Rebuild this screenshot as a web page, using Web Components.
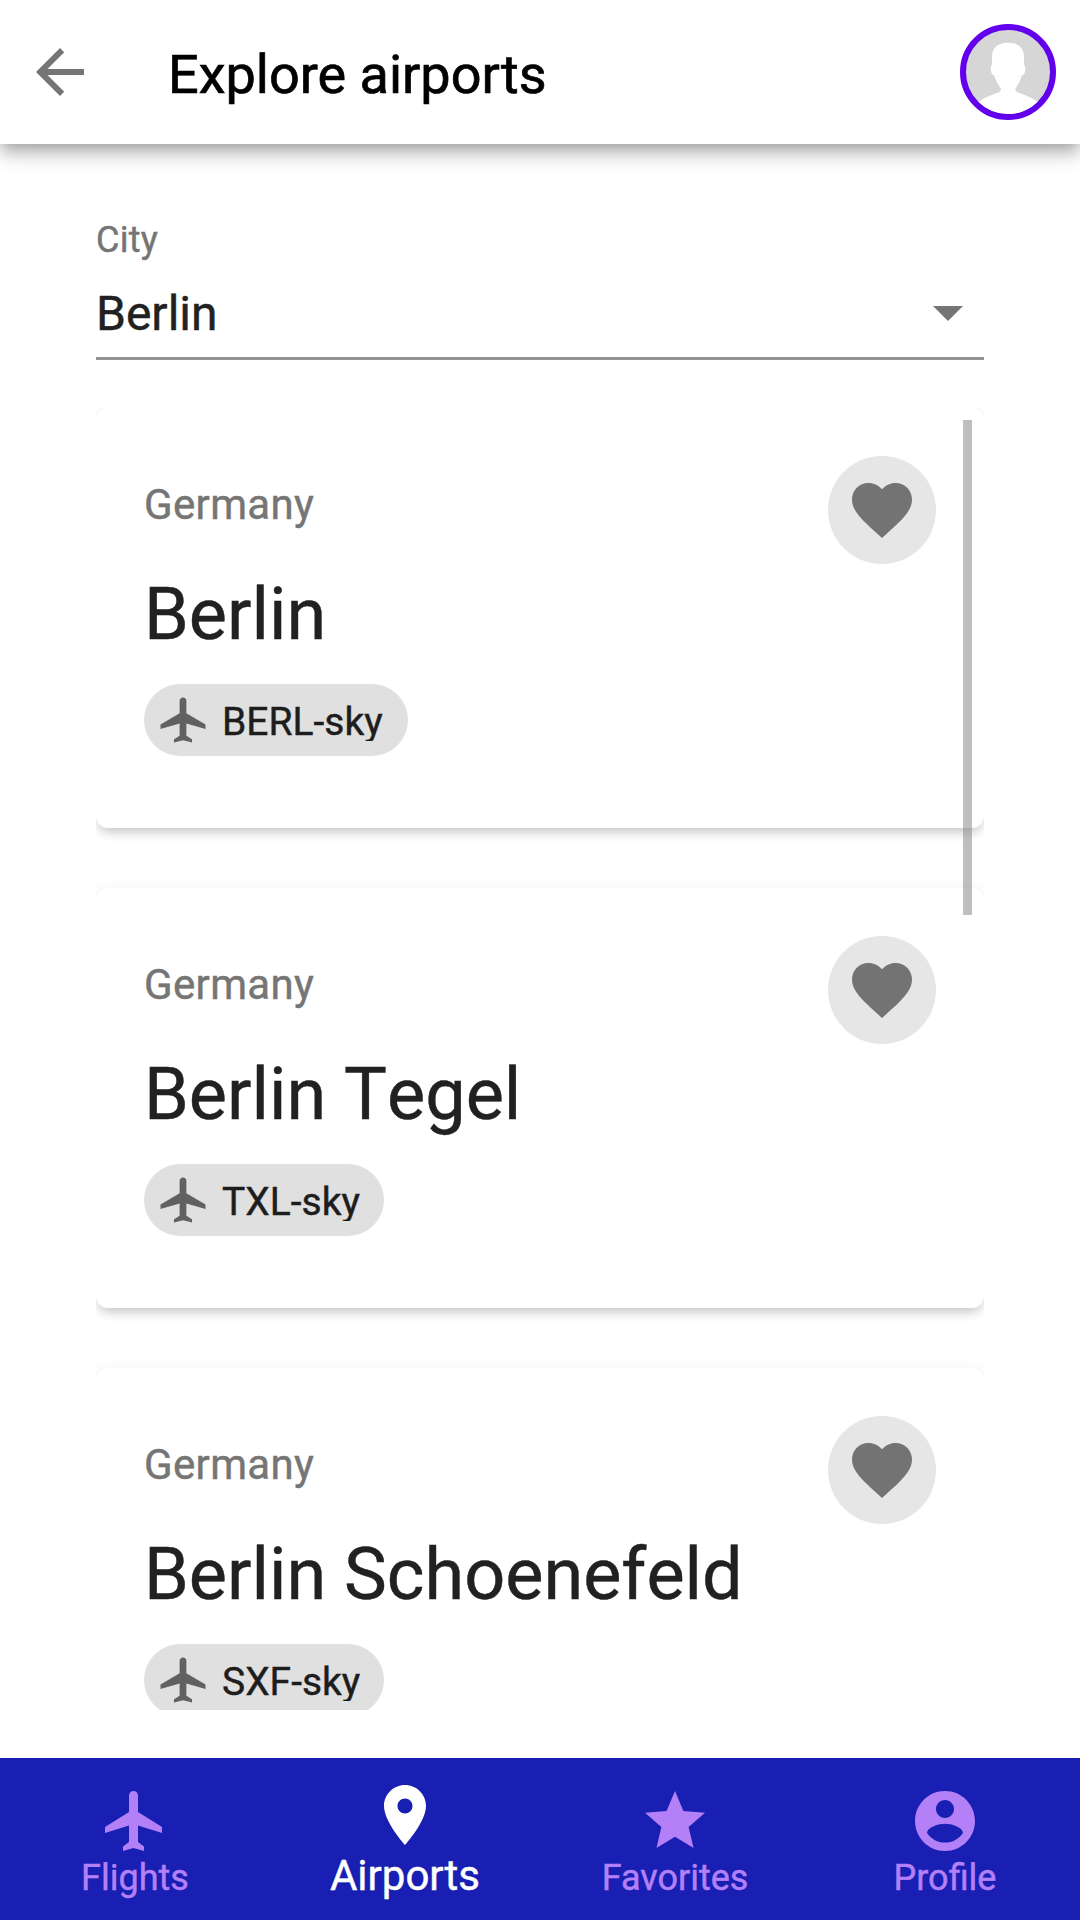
<!DOCTYPE html>
<html lang="en">
<head>
<meta charset="utf-8">
<title>Explore airports</title>
<style>
html,body{margin:0;height:100%;background:#fff}
body{font-family:Roboto,"Liberation Sans",sans-serif;color:#212121;-webkit-text-stroke:.45px currentColor}
</style>
</head>
<body>
<airport-app></airport-app>
<script>
const ICONS={
 back:'M20 11H7.83l5.59-5.59L12 4l-8 8 8 8 1.41-1.41L7.83 13H20v-2z',
 drop:'M7 10l5 5 5-5z',
 heart:'M12 21.35l-1.45-1.32C5.4 15.36 2 12.28 2 8.5 2 5.42 4.42 3 7.5 3c1.74 0 3.41.81 4.5 2.09C13.09 3.81 14.76 3 16.5 3 19.58 3 22 5.42 22 8.5c0 3.78-3.4 6.86-8.55 11.54L12 21.35z',
 plane:'M22 16v-2l-8.5-5V3.5c0-.83-.67-1.5-1.5-1.5s-1.5.67-1.5 1.5V9L2 14v2l8.5-2.5V19L8 20.5V22l4-1 4 1v-1.5L13.5 19v-5.5L22 16z',
 flight:'M21 16v-2l-8-5V3.5c0-.83-.67-1.5-1.5-1.5S10 2.67 10 3.5V9l-8 5v2l8-2.5V19l-2 1.5V22l3.5-1 3.5 1v-1.5L13 19v-5.5l8 2.5z',
 pin:'M12 2C8.13 2 5 5.13 5 9c0 5.25 7 13 7 13s7-7.75 7-13c0-3.87-3.13-7-7-7zm0 9.5c-1.38 0-2.5-1.12-2.5-2.5s1.12-2.5 2.5-2.5 2.5 1.12 2.5 2.5-1.12 2.5-2.5 2.5z',
 star:'M12 17.27L18.18 21l-1.64-7.03L22 9.24l-7.19-.61L12 2 9.19 8.63 2 9.24l5.46 4.73L5.82 21z',
 account:'M12 2C6.48 2 2 6.48 2 12s4.48 10 10 10 10-4.48 10-10S17.52 2 12 2zm0 3c1.66 0 3 1.34 3 3s-1.34 3-3 3-3-1.34-3-3 1.34-3 3-3zm0 14.2c-2.5 0-4.71-1.28-6-3.22.03-1.99 4-3.08 6-3.08 1.99 0 5.97 1.09 6 3.08-1.29 1.94-3.5 3.22-6 3.22z'
};
class Base extends HTMLElement{
 connectedCallback(){
  if(this.shadowRoot)return;
  const t=document.createElement('template');
  t.innerHTML=this.render();
  this.attachShadow({mode:'open'}).appendChild(t.content.cloneNode(true));
 }
}
customElements.define('md-icon',class extends Base{
 render(){return `<style>:host{display:block;flex:none;width:var(--icon-size,72px);height:var(--icon-size,72px)}svg{display:block;width:100%;height:100%;fill:currentColor}</style>
 <svg viewBox="0 0 24 24"><path d="${ICONS[this.getAttribute('name')]}"/></svg>`}
});
customElements.define('user-avatar',class extends Base{
 render(){return `<style>:host{display:block;box-sizing:border-box;width:96px;height:96px;border:6px solid #6200ee;border-radius:50%;overflow:hidden;background:#d6d6d6}svg{display:block}</style>
 <svg width="84" height="84" viewBox="66 30 84 84"><path fill="#fff" d="M108 42.8C98 42.8 92 48 92 56.500V65C90.600 65.500 90.600 68 91 71C91.500 74.300 92.500 75.200 94.300 75.500C95.500 80.500 98 84.500 100.700 88C101 90 100.500 91.500 98.500 92.500C92 94.500 85 97.300 79 101.500L66 114H150L137.500 101.500C131 97.300 124.500 94.500 118 92.500C115.700 91.500 115.200 90 115.600 88C118.500 84.500 120.500 80.500 121.700 75.500C123.600 75.200 124.600 74.300 125.100 71C125.500 68 125.400 65.500 124 65V56.500C124 48 118 42.800 108 42.800z"/></svg>`}
});
customElements.define('app-header',class extends Base{
 render(){return `<style>
 :host{display:flex;align-items:center;flex:none;box-sizing:border-box;height:144px;padding:0 24px;background:#fff;color:#000;position:relative;z-index:1;
 box-shadow:0 6px 12px -3px rgba(0,0,0,.2),0 12px 15px 0 rgba(0,0,0,.14),0 3px 30px 0 rgba(0,0,0,.12)}
 md-icon{color:#757575}
 h1{flex:1;margin:4px 0 0 72px;font-size:54px;line-height:63px;font-weight:400;-webkit-text-stroke-width:.7px}
 </style><md-icon name="back"></md-icon><h1><slot></slot></h1><user-avatar></user-avatar>`}
});
customElements.define('city-select',class extends Base{
 render(){return `<style>
 :host{display:flex;flex-direction:column;flex:none;height:141px}
 .label{font-size:36px;line-height:42px;letter-spacing:.3px;color:#757575}
 .field{display:flex;justify-content:space-between;margin-top:15px;height:81px;border-bottom:3px solid #949494}
 .value{font-size:48px;line-height:57px;margin-top:9px}
 md-icon{color:#757575}
 </style><div class="label">${this.getAttribute('label')}</div><div class="field"><div class="value"><slot></slot></div><md-icon name="drop"></md-icon></div>`}
});
customElements.define('code-chip',class extends Base{
 render(){return `<style>
 :host{display:flex;align-items:center;align-self:flex-start;height:72px;border-radius:36px;background:#e0e0e0;padding:0 24px 0 12px;gap:12px}
 md-icon{--icon-size:54px;color:#616161}
 span{display:block;height:42px;overflow:hidden;font-size:39px;line-height:46px;color:#1d1d1d;white-space:nowrap}
 :host([wide]) span{width:162px}
 </style><md-icon name="plane"></md-icon><span><slot></slot></span>`}
});
customElements.define('airport-card',class extends Base{
 render(){const code=this.getAttribute('code');return `<style>
 :host{display:flex;flex:none;box-sizing:border-box;height:420px;padding:48px;border-radius:12px;background:#fff;
 box-shadow:0 6px 12px -3px rgba(0,0,0,.2),0 3px 15px 0 rgba(0,0,0,.07)}
 .info{flex:1;display:flex;flex-direction:column}
 .country{margin-top:24px;font-size:42px;line-height:49px;letter-spacing:.35px;color:#757575}
 h2{margin:43px 0 27px;font-size:72px;line-height:85px;font-weight:400;white-space:nowrap;font-kerning:none}
 .fav{flex:none;display:flex;align-items:center;justify-content:center;width:108px;height:108px;border-radius:50%;background:#e6e6e6;color:#737373}
 </style><div class="info"><div class="country">${this.getAttribute('country')}</div><h2><slot></slot></h2><code-chip${code.length>7?' wide':''}>${code}</code-chip></div><div class="fav"><md-icon name="heart"></md-icon></div>`}
});
customElements.define('airport-list',class extends Base{
 render(){return `<style>
 :host{display:flex;flex-direction:column;gap:60px;flex:none;height:1302px;margin-top:48px;overflow:hidden;position:relative}
 .thumb{position:absolute;right:12px;top:12px;width:9px;height:495px;background:rgba(128,128,128,.5)}
 </style><slot></slot><div class="thumb"></div>`}
});
customElements.define('nav-item',class extends Base{
 render(){return `<style>
 :host{flex:1;display:flex;flex-direction:column;align-items:center;padding-top:27px;color:#b380f7;font-size:36px;line-height:42px}
 :host([selected]){padding-top:21px;color:#fff;font-size:42px;line-height:49px}
 </style><md-icon name="${this.getAttribute('icon')}"></md-icon><span><slot></slot></span>`}
});
customElements.define('bottom-nav',class extends Base{
 render(){return `<style>:host{display:flex;flex:none;height:162px;background:#181fb2}</style><slot></slot>`}
});
customElements.define('airport-app',class extends Base{
 render(){return `<style>
 :host{display:flex;flex-direction:column;width:1080px;height:1920px;overflow:hidden;background:#fff}
 main{flex:1;padding:75px 96px 0}
 </style>
 <app-header>Explore airports</app-header>
 <main>
  <city-select label="City">Berlin</city-select>
  <airport-list>
   <airport-card country="Germany" code="BERL-sky">Berlin</airport-card>
   <airport-card country="Germany" code="TXL-sky">Berlin Tegel</airport-card>
   <airport-card country="Germany" code="SXF-sky">Berlin Schoenefeld</airport-card>
  </airport-list>
 </main>
 <bottom-nav>
  <nav-item icon="flight">Flights</nav-item>
  <nav-item icon="pin" selected>Airports</nav-item>
  <nav-item icon="star">Favorites</nav-item>
  <nav-item icon="account">Profile</nav-item>
 </bottom-nav>`}
});
</script>
</body>
</html>
